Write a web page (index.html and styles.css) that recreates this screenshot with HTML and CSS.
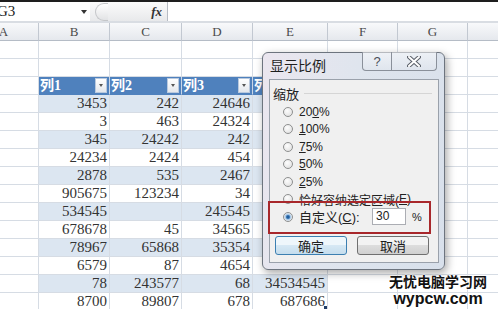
FILE: index.html
```html
<!DOCTYPE html>
<html lang="zh-CN">
<head>
    <meta charset="UTF-8">
    <title>显示比例</title>
    <link rel="stylesheet" href="styles.css">
</head>
<body>
    <div class="topline"></div>
    <div class="formula-bar">
        <div class="name-box"><span class="ref">G3</span><span class="nb-arrow"></span></div>
        <div class="fx-area"><span class="pill"></span><span class="fx">fx</span></div>
        <div class="formula-input"></div>
    </div>

    <div class="sheet">
        <div class="cell col-head">A</div><div class="cell col-head">B</div><div class="cell col-head">C</div><div class="cell col-head">D</div>
        <div class="cell col-head">E</div><div class="cell col-head">F</div><div class="cell col-head">G</div><div class="cell col-head"></div>

        <div class="cell"></div><div class="cell"></div><div class="cell"></div><div class="cell"></div><div class="cell"></div><div class="cell"></div><div class="cell"></div><div class="cell"></div>
        <div class="cell"></div><div class="cell"></div><div class="cell"></div><div class="cell"></div><div class="cell"></div><div class="cell"></div><div class="cell"></div><div class="cell"></div>

        <div class="cell"></div>
        <div class="cell th"><span>列1</span><span class="filter"></span></div>
        <div class="cell th"><span>列2</span><span class="filter"></span></div>
        <div class="cell th"><span>列3</span><span class="filter"></span></div>
        <div class="cell th"><span>列4</span><span class="filter"></span></div>
        <div class="cell"></div><div class="cell"></div><div class="cell"></div>

        <div class="cell"></div><div class="cell band">3453</div><div class="cell band">242</div><div class="cell band">24646</div><div class="cell band"></div><div class="cell"></div><div class="cell"></div><div class="cell"></div>
        <div class="cell"></div><div class="cell">3</div><div class="cell">463</div><div class="cell">24324</div><div class="cell"></div><div class="cell"></div><div class="cell"></div><div class="cell"></div>
        <div class="cell"></div><div class="cell band">345</div><div class="cell band">24242</div><div class="cell band">242</div><div class="cell band"></div><div class="cell"></div><div class="cell"></div><div class="cell"></div>
        <div class="cell"></div><div class="cell">24234</div><div class="cell">2424</div><div class="cell">454</div><div class="cell"></div><div class="cell"></div><div class="cell"></div><div class="cell"></div>
        <div class="cell"></div><div class="cell band">2878</div><div class="cell band">535</div><div class="cell band">2467</div><div class="cell band"></div><div class="cell"></div><div class="cell"></div><div class="cell"></div>
        <div class="cell"></div><div class="cell">905675</div><div class="cell">123234</div><div class="cell">34</div><div class="cell"></div><div class="cell"></div><div class="cell"></div><div class="cell"></div>
        <div class="cell"></div><div class="cell band">534545</div><div class="cell band"></div><div class="cell band">245545</div><div class="cell band"></div><div class="cell"></div><div class="cell"></div><div class="cell"></div>
        <div class="cell"></div><div class="cell">678678</div><div class="cell">45</div><div class="cell">34565</div><div class="cell"></div><div class="cell"></div><div class="cell"></div><div class="cell"></div>
        <div class="cell"></div><div class="cell band">78967</div><div class="cell band">65868</div><div class="cell band">35354</div><div class="cell band"></div><div class="cell"></div><div class="cell"></div><div class="cell"></div>
        <div class="cell"></div><div class="cell">6579</div><div class="cell">87</div><div class="cell">4654</div><div class="cell"></div><div class="cell"></div><div class="cell"></div><div class="cell"></div>
        <div class="cell"></div><div class="cell band">78</div><div class="cell band">243577</div><div class="cell band">68</div><div class="cell band">34534545</div><div class="cell"></div><div class="cell"></div><div class="cell"></div>
        <div class="cell"></div><div class="cell">8700</div><div class="cell">89807</div><div class="cell">678</div><div class="cell last">687686<span class="handle"></span></div><div class="cell"></div><div class="cell"></div><div class="cell"></div>
    </div>

    <div class="dialog">
        <div class="dlg-title">显示比例</div>
        <div class="dlg-buttons">
            <span class="tb-btn help">?</span>
            <span class="tb-btn close">
                <svg width="14" height="11" viewBox="0 0 14 11">
                    <path d="M2 1 L12 10 M12 1 L2 10" stroke="#5a5f68" stroke-width="4" stroke-linecap="round"/>
                    <path d="M2 1 L12 10 M12 1 L2 10" stroke="#fff" stroke-width="2" stroke-linecap="round"/>
                </svg>
            </span>
        </div>
        <div class="panel">
            <div class="group-label">缩放</div>
            <div class="options">
                <div class="option"><span class="radio"></span>20<u>0</u>%</div>
                <div class="option"><span class="radio"></span><u>1</u>00%</div>
                <div class="option"><span class="radio"></span><u>7</u>5%</div>
                <div class="option"><span class="radio"></span><u>5</u>0%</div>
                <div class="option"><span class="radio"></span><u>2</u>5%</div>
                <div class="option"><span class="radio"></span>恰好容纳选定区域(<u>E</u>)</div>
                <div class="option"><span class="radio checked"></span><span class="custom-label">自定义(<u>C</u>):</span><span class="zoom-input">30</span><span class="pct">%</span></div>
            </div>
            <div class="actions">
                <span class="btn default">确定</span>
                <span class="btn">取消</span>
            </div>
        </div>
        <div class="highlight"></div>
    </div>

    <div class="watermark">
        <div class="wm-cn">无忧电脑学习网</div>
        <div class="wm-en">wypcw.com</div>
    </div>
</body>
</html>
```

FILE: styles.css
```css
body {
    margin: 0;
    width: 498px;
    height: 309px;
    overflow: hidden;
    position: relative;
    background-color: #fff;
    font-family: "Liberation Serif", "Noto Sans CJK SC", serif;
}
.topline {
    height: 2px;
    background-color: #1e1e1e;
}
.formula-bar {
    display: flex;
    height: 19px;
    border-bottom: 2px solid #d9dde3;
}
.name-box {
    width: 90px;
    display: flex;
    align-items: center;
    justify-content: space-between;
    overflow: hidden;
}
.name-box .ref {
    margin-left: -3px;
    font-size: 15px;
    color: #222;
}
.nb-arrow {
    width: 0;
    height: 0;
    border-left: 3px solid transparent;
    border-right: 3px solid transparent;
    border-top: 4px solid #333;
    margin-right: 3px;
}
.fx-area {
    width: 77px;
    display: flex;
    align-items: center;
    justify-content: space-between;
    background: linear-gradient(#fbfbfb, #e8e9eb);
    border-right: 1px solid #b7bcc4;
}
.pill {
    width: 12px;
    height: 16px;
    margin-left: 5px;
    border: 1px solid #c4c6c9;
    border-right: none;
    border-radius: 9px 0 0 9px;
    background: linear-gradient(#fff, #e2e3e5);
}
.fx {
    margin-right: 5px;
    font-size: 13px;
    font-style: italic;
    font-weight: bold;
    color: #333;
}
.formula-input {
    flex: 1;
}

.sheet {
    display: grid;
    grid-template-columns: 70px 71px 72px 71px 75px 70px 70px 90px;
    grid-auto-rows: 18px;
    margin-left: -31px;
}
.cell {
    box-sizing: border-box;
    border-right: 1px solid #d6dce4;
    border-bottom: 1px solid #d6dce4;
    padding-right: 2px;
    font-size: 15px;
    line-height: 17px;
    text-align: right;
    color: #333;
    white-space: nowrap;
    overflow: hidden;
}
.col-head {
    padding: 0;
    text-align: center;
    font-size: 13px;
    color: #4a4a4a;
    background: linear-gradient(#f8f9fb, #e5e8ed);
    border-right-color: #c2c8d1;
    border-bottom-color: #b5bcc6;
}
.band {
    background-color: #dce6f1;
}
.th {
    display: flex;
    justify-content: space-between;
    align-items: center;
    padding: 0 2px 0 1px;
    background-color: #4f81bd;
    border-right-color: #c9d6e7;
    border-bottom-color: #4f81bd;
    color: #fff;
    font-weight: bold;
    font-size: 14px;
}
.filter {
    position: relative;
    width: 12px;
    height: 15px;
    box-sizing: border-box;
    border: 1px solid #b9c9de;
    background: linear-gradient(#ffffff, #e3e7ec);
}
.filter::after {
    content: "";
    position: absolute;
    left: 3px;
    top: 5px;
    border-left: 2.5px solid transparent;
    border-right: 2.5px solid transparent;
    border-top: 3px solid #555;
}
.last {
    position: relative;
}
.handle {
    position: absolute;
    right: 0;
    bottom: 1px;
    width: 3px;
    height: 3px;
    background-color: #1f3c66;
}

.dialog {
    position: absolute;
    left: 262px;
    top: 52px;
    width: 183px;
    height: 218px;
    box-sizing: border-box;
    display: flex;
    flex-direction: column;
    border: 1px solid #6d747e;
    border-radius: 6px;
    background: linear-gradient(100deg, #ebe6ef, #dfe5ee 45%, #d8e0eb);
    box-shadow: 2px 3px 8px rgba(0,0,0,0.35);
    font-family: "Liberation Sans", "Noto Sans CJK SC", sans-serif;
}
.dlg-title {
    height: 26px;
    padding-left: 7px;
    line-height: 26px;
    font-size: 14px;
    color: #1e1e1e;
}
.dlg-buttons {
    position: absolute;
    top: -1px;
    right: 7px;
    display: flex;
}
.tb-btn {
    height: 19px;
    box-sizing: border-box;
    display: flex;
    align-items: center;
    justify-content: center;
    border: 1px solid #8a909a;
    border-top: none;
    background: linear-gradient(rgba(255,255,255,0.5), rgba(225,230,238,0.6));
}
.help {
    width: 30px;
    border-radius: 0 0 0 4px;
    font-size: 13px;
    color: #4a4f58;
}
.close {
    width: 45px;
    border-left: none;
    border-radius: 0 0 4px 0;
}
.panel {
    flex: 1;
    margin: 0 5px 6px 6px;
    padding: 5px 0 0 3px;
    border: 1px solid #9aa1ab;
    background-color: #f0f0f0;
}
.group-label {
    display: flex;
    align-items: center;
    height: 16px;
    font-size: 13px;
    color: #222;
}
.group-label::after {
    content: "";
    flex: 1;
    margin: 0 6px 0 5px;
    border-top: 1px solid #d5d5d5;
}
.options {
    margin-top: 2px;
}
.option {
    display: flex;
    align-items: center;
    height: 17.5px;
    padding-left: 10px;
    font-size: 12px;
    color: #222;
}
.radio {
    width: 10px;
    height: 10px;
    margin-right: 6px;
    box-sizing: border-box;
    border: 1px solid #8e8f8f;
    border-radius: 50%;
    background: radial-gradient(circle at 40% 35%, #fdfdfd, #dcdcdc);
}
.radio.checked {
    background: radial-gradient(circle, #1f4f84 0, #2d6eb0 25%, #a9c8e6 45%, #f4f4f4 75%);
}
.custom-label {
    width: 73px;
    font-size: 13px;
}
.zoom-input {
    width: 34px;
    height: 17px;
    box-sizing: border-box;
    padding-left: 3px;
    border: 1px solid #abadb3;
    background-color: #fff;
    line-height: 15px;
    font-size: 12px;
}
.pct {
    margin-left: 6px;
    font-size: 11px;
}
.actions {
    display: flex;
    gap: 10px;
    margin: 10px 0 0 2px;
}
.btn {
    width: 72px;
    height: 19px;
    box-sizing: border-box;
    display: flex;
    align-items: center;
    justify-content: center;
    border: 1px solid #707070;
    border-radius: 3px;
    background: linear-gradient(#f3f3f3 50%, #dddddd 50%, #d0d0d0);
    font-size: 13px;
    color: #1e1e1e;
}
.btn.default {
    border-color: #3c7fb1;
    background: linear-gradient(#eef6fb 50%, #d6e8f4 50%, #c5dded);
}
.highlight {
    position: absolute;
    left: 5px;
    top: 148px;
    width: 163px;
    height: 33px;
    box-sizing: border-box;
    border: 2px solid #a8272b;
}

.watermark {
    position: absolute;
    left: 388px;
    top: 272px;
    width: 100px;
    text-align: center;
    color: #111;
    font-weight: bold;
    text-shadow: 0 0 2px #fff, 0 0 2px #fff;
}
.wm-cn {
    font-family: "Noto Sans CJK SC", sans-serif;
    font-size: 14px;
    line-height: 18px;
}
.wm-en {
    font-family: "Liberation Sans", sans-serif;
    font-size: 16px;
    line-height: 17px;
}
```
